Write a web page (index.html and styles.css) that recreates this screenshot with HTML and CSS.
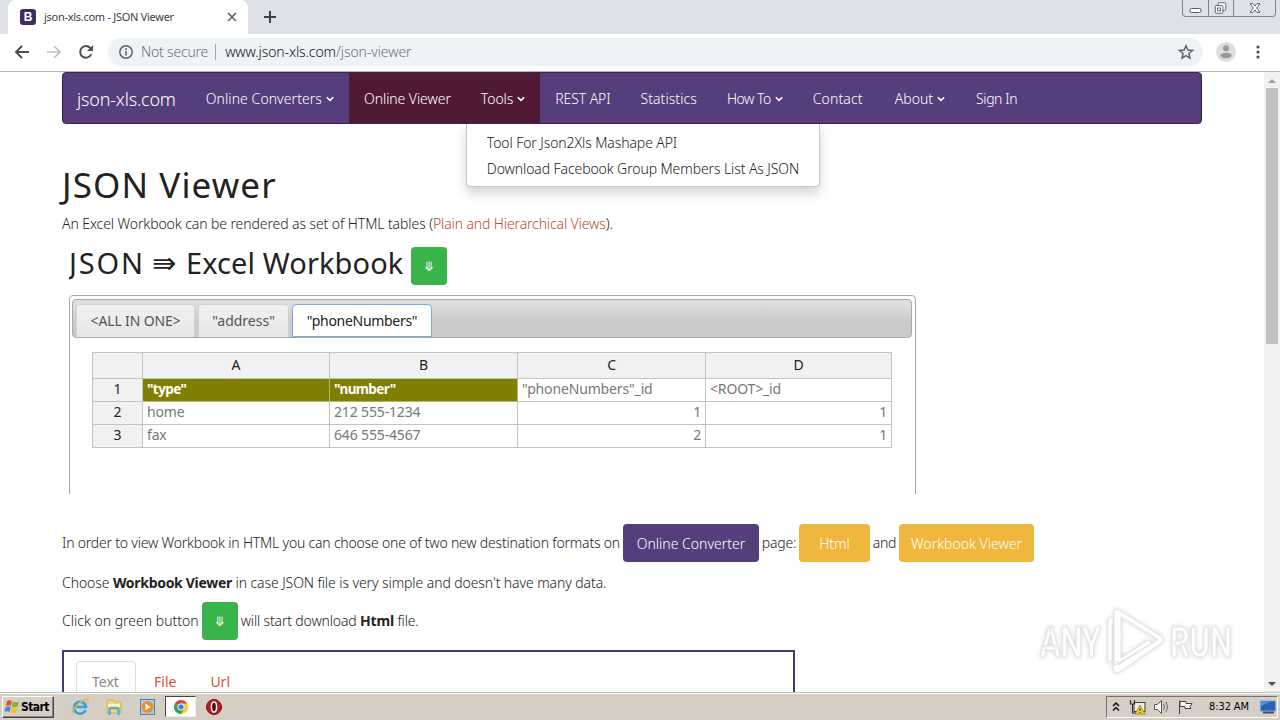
FILE: index.html
```html
<!DOCTYPE html>
<html lang="en">
<head>
    <meta charset="UTF-8">
    <title>json-xls.com - JSON Viewer</title>
    <link rel="stylesheet" href="styles.css">
</head>
<body>
    <!-- tab strip -->
    <div class="tabstrip">
        <div class="tab">
            <span class="favicon">B</span>
            <span class="tab-title">json-xls.com - JSON Viewer</span>
            <svg class="tab-close" width="10" height="10" viewBox="0 0 10 10"><path d="M1 1l8 8M9 1l-8 8" stroke="#5f6368" stroke-width="1.7"/></svg>
        </div>
        <svg class="new-tab" width="14" height="14" viewBox="0 0 14 14"><path d="M7 1v12M1 7h12" stroke="#3c4043" stroke-width="2"/></svg>
        <div class="window-buttons">
            <svg width="25" height="16" viewBox="0 0 25 16"><rect x="7" y="8.500" width="11" height="4" rx="1.500" fill="#fff" stroke="#5b5f68"/></svg>
            <svg width="25" height="16" viewBox="0 0 25 16"><g fill="#fff" stroke="#5b5f68"><rect x="9.500" y="2.500" width="8" height="8" rx="1"/><rect x="6.500" y="5.500" width="8" height="8" rx="1"/><rect x="9" y="8" width="3" height="3"/></g></svg>
            <svg width="42" height="16" viewBox="0 0 42 16"><path d="M16.500 3.500h3l2 2.500 2-2.500h3l-3.200 4.500 3.200 4.500h-3l-2-2.500-2 2.500h-3l3.200-4.500z" fill="#fff" stroke="#5b5f68"/></svg>
        </div>
    </div>

    <!-- address bar -->
    <div class="toolbar">
        <svg class="nav-icon" width="16" height="16" viewBox="0 0 16 16"><path d="M15 8H2M8 2L2 8l6 6" fill="none" stroke="#4b4e52" stroke-width="1.900"/></svg>
        <svg class="nav-icon" width="16" height="16" viewBox="0 0 16 16"><path d="M1 8h13M8 2l6 6-6 6" fill="none" stroke="#bcbec1" stroke-width="1.700"/></svg>
        <svg class="nav-icon" width="16" height="16" viewBox="0 0 16 16"><path d="M13.300 10.200A5.800 5.800 0 1 1 12.300 4" fill="none" stroke="#4b4e52" stroke-width="2"/><path d="M15 1v6H9z" fill="#4b4e52"/></svg>
        <div class="omnibox">
            <svg width="14" height="14" viewBox="0 0 14 14"><circle cx="7" cy="7" r="6.200" fill="none" stroke="#5f6368" stroke-width="1.500"/><path d="M7 6v4.500M7 3.300v1.600" stroke="#5f6368" stroke-width="1.600"/></svg>
            <span class="insecure">Not secure</span>
            <span class="url"><b>www.json-xls.com</b>/json-viewer</span>
            <svg class="star" width="16" height="16" viewBox="0 0 16 16"><path d="M8 1.800l1.800 4.300 4.700.4-3.600 3 1.100 4.600L8 11.700l-4 2.400 1.100-4.600-3.600-3 4.700-.4z" fill="none" stroke="#5f6368" stroke-width="1.500"/></svg>
        </div>
        <svg class="avatar" width="20" height="20" viewBox="0 0 20 20"><circle cx="10" cy="10" r="10" fill="#dcdddf"/><circle cx="10" cy="6.300" r="3" fill="#97999c"/><ellipse cx="10" cy="13.500" rx="5.500" ry="2.800" fill="#97999c"/></svg>
        <svg class="menu-dots" width="4" height="14" viewBox="0 0 4 14"><g fill="#4b4e52"><circle cx="2" cy="2" r="1.600"/><circle cx="2" cy="7" r="1.600"/><circle cx="2" cy="12" r="1.600"/></g></svg>
    </div>

    <div class="viewport">
        <div class="page">
            <nav class="navbar">
                <a class="brand">json-xls.com</a>
                <a class="wide">Online Converters<svg class="caret" viewBox="0 0 8 6"><path d="M.8 1.200L4 4.400l3.200-3.200"/></svg></a>
                <a class="active">Online Viewer</a>
                <div class="dropdown">
                    <a class="active">Tools<svg class="caret" viewBox="0 0 8 6"><path d="M.8 1.200L4 4.400l3.200-3.200"/></svg></a>
                    <div class="dropdown-menu">
                        <a>Tool For Json2Xls Mashape API</a>
                        <a>Download Facebook Group Members List As JSON</a>
                    </div>
                </div>
                <a class="rest">REST API</a>
                <a class="wide">Statistics</a>
                <a class="tight">How To<svg class="caret" viewBox="0 0 8 6"><path d="M.8 1.200L4 4.400l3.200-3.200"/></svg></a>
                <a class="contact">Contact</a>
                <a class="about">About<svg class="caret" viewBox="0 0 8 6"><path d="M.8 1.200L4 4.400l3.200-3.200"/></svg></a>
                <a class="signin">Sign In</a>
            </nav>

            <h1>JSON Viewer</h1>
            <p class="intro">An Excel Workbook can be rendered as set of HTML tables (<a class="link">Plain and Hierarchical Views</a>).</p>

            <section class="shot">
                <h2><span class="json">JSON</span><span class="arrow">⇛</span><span class="excel">Excel Workbook</span><span class="btn green">⤋</span></h2>
                <div class="sheet">
                    <div class="sheet-tabs">
                        <span class="all">&lt;ALL IN ONE&gt;</span>
                        <span class="address">"address"</span>
                        <span class="phones">"phoneNumbers"</span>
                    </div>
                    <table>
                        <colgroup><col class="c0"><col class="c1"><col class="c2"><col class="c3"><col class="c4"></colgroup>
                        <tr class="head"><th></th><th>A</th><th>B</th><th>C</th><th>D</th></tr>
                        <tr><th>1</th><td class="key">"type"</td><td class="key">"number"</td><td>"phoneNumbers"_id</td><td>&lt;ROOT&gt;_id</td></tr>
                        <tr><th>2</th><td>home</td><td>212 555-1234</td><td class="num">1</td><td class="num">1</td></tr>
                        <tr><th>3</th><td>fax</td><td>646 555-4567</td><td class="num">2</td><td class="num">1</td></tr>
                    </table>
                </div>
            </section>

            <p class="row formats"><span class="long">In order to view Workbook in HTML you can choose one of two new destination formats on</span><a class="btn purple">Online Converter</a><span class="word">page:</span><a class="btn orange html">Html</a><span class="word">and</span><a class="btn orange book">Workbook Viewer</a></p>
            <p class="choose">Choose <b>Workbook Viewer</b> in case JSON file is very simple and doesn't have many data.</p>
            <p class="row click"><span>Click on green button</span><a class="btn green">⤋</a><span class="after">will start download <b>Html</b> file.</span></p>

            <div class="source">
                <span class="current">Text</span>
                <span>File</span>
                <span>Url</span>
            </div>
        </div>

        <div class="scrollbar">
            <svg width="16" height="16" viewBox="0 0 16 16"><path d="M4 11l4-4 4 4z" fill="#a0a0a0"/></svg>
            <div class="thumb"></div>
            <svg width="16" height="16" viewBox="0 0 16 16"><path d="M4 6h8l-4 4z" fill="#505050"/></svg>
        </div>

        <svg class="watermark" width="230" height="84" viewBox="0 0 230 84">
            <g fill="#fff" stroke="#e4e4e4" stroke-width="1">
                <text x="9" y="56" textLength="61" lengthAdjust="spacingAndGlyphs">ANY</text>
                <text x="139" y="56" textLength="62" lengthAdjust="spacingAndGlyphs">RUN</text>
                <path d="M88 9l42 26c3 2 3 5 0 7L90 70c-4 3-8 1-8-3v-4l5-3v4l38-24c2-1 2-2 0-3L90 16v41l27-18 4 3-38 23V12c0-3 2-5 5-3z"/>
                <path d="M77 62V21c0-3 2-5 5-4v5l-1 2v35z"/>
            </g>
        </svg>
    </div>

    <!-- windows taskbar -->
    <footer class="taskbar">
        <div class="start">
            <svg width="17" height="16" viewBox="0 0 17 16"><path d="M3 2c2-1.300 3.500-1 5 0L7 7C5 6 4 6 2 7z" fill="#e5532d"/><path d="M9 2.500c2 1 4 1 6 0l-1.500 5c-2 1-3.500.8-5.500 0z" fill="#79b82b"/><path d="M1.700 8c2-1 3.500-.8 5 0L5.500 13c-1.500-1-3-1-5 0z" fill="#3d8be0"/><path d="M7.800 8.500c2 1 3.500 1 5.500 0L12 13.500c-2 1-3.500 1-5.500 0z" fill="#f5bd24"/></svg>
            Start
        </div>
        <div class="quick">
            <svg width="18" height="18" viewBox="0 0 18 18"><path d="M14.500 12.300A6 6 0 1 1 15 9H5" fill="none" stroke="#35a3e3" stroke-width="2.600"/><path d="M2 16C-1 13 10 1 16 1.500c2 .3 1 3 0 4.500" fill="none" stroke="#e7b930" stroke-width="1.300"/></svg>
            <svg width="18" height="18" viewBox="0 0 18 18"><path d="M2 2h6l1 2h7v11H2z" fill="#f0d87c" stroke="#cdae50"/><path d="M3 6h12v3H3z" fill="#fff3b4"/><path d="M4.500 17v-5q0-2 2-2h5q2 0 2 2v5" fill="none" stroke="#59acd8" stroke-width="2.500"/></svg>
            <svg width="18" height="18" viewBox="0 0 18 18"><rect x="1.500" y="1.500" width="14" height="15" fill="#a9cdec" stroke="#5083b5"/><circle cx="8.500" cy="9" r="6" fill="#f28a1c"/><path d="M6.500 5.500l5 3.500-5 3.500z" fill="#fff"/></svg>
            <span class="running"><svg width="16" height="16" viewBox="0 0 16 16"><path d="M8 8L1.900 4.500A7 7 0 0 1 14.100 4.500z" fill="#df4337"/><path d="M8 8V4.500h6.100A7 7 0 0 1 8 15z" fill="#f7cc2e"/><path d="M8 8l3 2-3 5A7 7 0 0 1 1.900 4.500z" fill="#35a354"/><circle cx="8" cy="8" r="3.200" fill="#3f7fe8" stroke="#fff"/></svg></span>
            <svg width="18" height="18" viewBox="0 0 18 18"><circle cx="9" cy="9" r="7.500" fill="#bd1720" stroke="#7c1014"/><ellipse cx="9" cy="9" rx="2.600" ry="5" fill="#4c080b" stroke="#fff" stroke-width="1.500"/></svg>
        </div>
        <div class="tray">
            <svg width="8" height="12" viewBox="0 0 8 12"><path d="M1 5l3-3 3 3M1 9.500l3-3 3 3" fill="none" stroke="#111" stroke-width="1.500"/></svg>
            <svg class="net" width="17" height="16" viewBox="0 0 17 16"><rect x="5" y="3.500" width="11" height="9" fill="#eee" stroke="#444"/><path d="M1.500 1v4h4V1M3.500 5v9h5" fill="none" stroke="#333" stroke-width="1.200"/><path d="M11 6l5 9H6z" fill="#f5d51b" stroke="#806c10" stroke-width=".7"/><path d="M11 9v3M11 13v1" stroke="#222"/></svg>
            <svg width="17" height="16" viewBox="0 0 17 16"><path d="M1.500 5.500h3l4-4v13l-4-4h-3z" fill="#fff" stroke="#555"/><path d="M10.500 5q2 3 0 6M12.700 3q3.300 5 0 10" fill="none" stroke="#666"/></svg>
            <svg class="flag" width="17" height="16" viewBox="0 0 17 16"><path d="M2.500 15V1.500M3 2.500h6v2h6l-2 3 1 2H8v-2H3z" fill="#fff" stroke="#444"/></svg>
            <span class="clock">8:32 AM</span>
            <svg width="16" height="14" viewBox="0 0 16 14"><rect x=".5" y="1" width="15" height="10" fill="#2463b8" stroke="#75a5d8"/><path d="M1 6L11 1.500H1z" fill="#4c91de"/><path d="M3 12.500h11" stroke="#384f72" stroke-width="2"/></svg>
        </div>
    </footer>
</body>
</html>
```
FILE: styles.css
```css
* { box-sizing: border-box; }
body {
    margin: 0;
    width: 1280px;
    height: 720px;
    overflow: hidden;
    display: flex;
    flex-direction: column;
    background: #fff;
    color: #222;
    font: 300 14px/20px 'Noto Sans', 'Open Sans', sans-serif;
}
svg { display: block; flex: none; }

/* browser chrome */
.tabstrip {
    height: 34px;
    display: flex;
    align-items: center;
    background: #dee1e8;
    padding-left: 8px;
}
.tab {
    width: 240px;
    height: 34px;
    padding: 0 12px;
    display: flex;
    align-items: center;
    background: #fff;
    border-radius: 8px 8px 0 0;
    font-size: 11px;
    font-weight: 400;
    letter-spacing: -0.28px;
    color: #3c4043;
}
.favicon {
    width: 16px;
    height: 16px;
    border-radius: 3px;
    background: #3f2c63;
    color: #fff;
    font: bold 12px/16px 'Liberation Sans', sans-serif;
    text-align: center;
}
.tab-title { margin-left: 8px; }
.tab-close { margin-left: auto; margin-right: -1px; }
.new-tab { margin-left: 15px; }
.window-buttons {
    align-self: flex-start;
    display: flex;
    margin-left: auto;
    margin-right: 4px;
    border: 1px solid #7f838c;
    border-top: 0;
    border-radius: 0 0 4px 4px;
}
.window-buttons svg + svg { border-left: 1px solid #7f838c; }
.toolbar {
    height: 38px;
    display: flex;
    align-items: center;
    padding: 0 20px 1px 14px;
    border-bottom: 1px solid #b5b5b5;
}
.nav-icon { margin-right: 16px; }
.omnibox {
    flex: 1;
    height: 28px;
    display: flex;
    align-items: center;
    margin-left: -2px;
    padding: 0 9px 0 11px;
    border-radius: 14px;
    background: #f0f3f6;
    color: #6d7175;
}
.insecure {
    margin-left: 8px;
    padding-right: 7px;
    border-right: 1px solid #a5a8ab;
    line-height: 16px;
    letter-spacing: -0.2px;
}
.url { margin-left: 9px; letter-spacing: -0.1px; }
.url b { font-weight: 300; color: #111; }
.star { margin-left: auto; }
.avatar { margin-left: 13px; }
.menu-dots { margin-left: 20px; }

/* page */
.viewport {
    flex: 1;
    min-height: 0;
    display: flex;
    position: relative;
}
.page {
    flex: 1;
    padding: 0 62px;
    overflow: hidden;
}
.navbar {
    height: 52px;
    display: flex;
    background: #563d7c;
    border: 1px solid #3e2348;
    border-radius: 4px;
}
.navbar a {
    display: flex;
    align-items: center;
    padding: 2px 15px 0;
    color: #fff;
    white-space: nowrap;
}
.navbar .brand { font-size: 18px; padding: 1px 15px 0 14px; letter-spacing: -0.2px; }
.navbar .wide { letter-spacing: 0.07px; }
.navbar .rest { letter-spacing: -0.1px; }
.navbar .tight { letter-spacing: -0.5px; }
.navbar .contact { letter-spacing: 0.15px; }
.navbar .about { padding-left: 17px; }
.navbar .signin { padding-left: 16px; letter-spacing: -0.4px; }
.navbar .active { height: 50px; letter-spacing: -0.07px; background: #501a35; }
.caret {
    width: 8px;
    height: 6px;
    margin-left: 4px;
    fill: none;
    stroke: #fff;
    stroke-width: 1.6;
}
.dropdown { position: relative; }
.dropdown-menu {
    position: absolute;
    top: 51px;
    left: 0;
    width: 354px;
    height: 63px;
    padding: 5px 0;
    background: #fff;
    border: 1px solid #c6c6c6;
    border-top: 0;
    border-radius: 0 0 4px 4px;
    box-shadow: 0 6px 12px rgba(0, 0, 0, 0.175);
}
.navbar .dropdown-menu a {
    height: 26px;
    padding: 2px 0 0 20px;
    color: #222;
    letter-spacing: -0.1px;
}
h1 {
    margin: 41px 0 0;
    font-size: 35px;
    font-weight: 400;
    line-height: 40px;
    letter-spacing: 1.1px;
}
p { margin: 0; white-space: nowrap; }
b { font-weight: 700; }
.intro { margin-top: 9px; letter-spacing: -0.09px; }
.link { color: #c04a29; letter-spacing: -0.13px; }
.shot {
    width: 848px;
    height: 260px;
    margin: 0 0 0 7px;
    overflow: hidden;
    font-weight: 400;
    color: #555;
}
h2 {
    display: flex;
    align-items: center;
    height: 61px;
    margin: 0;
    padding-top: 3px;
    color: #222;
    font-size: 29px;
    font-weight: 400;
}
.json, .arrow, .excel { padding-bottom: 6px; }
.json { width: 83px; letter-spacing: 1.8px; }
.arrow { width: 34px; font-family: 'DejaVu Sans', sans-serif; }
.excel { width: 225px; letter-spacing: 0.1px; }
.btn {
    height: 38px;
    padding: 2px 0 0;
    display: flex;
    align-items: center;
    justify-content: center;
    border-radius: 4px;
    color: #fff;
    font-size: 14px;
    font-weight: 300;
}
.green {
    width: 36px;
    padding: 1px 0 0;
    background: #38b44a;
    font: 400 13px 'DejaVu Sans', sans-serif;
}
.sheet {
    width: 847px;
    height: 220px;
    padding: 3px 3px 0 2px;
    border: 1px solid #a7a7a7;
    border-radius: 4px 4px 0 0;
}
.sheet-tabs {
    height: 39px;
    display: flex;
    gap: 3px;
    padding: 4px 0 0 3px;
    border: 1px solid #aaa;
    border-radius: 4px;
    background: linear-gradient(#e2e2e2, #c9c9c9 60%, #cbcbcb);
}
.sheet-tabs span {
    padding: 6px 0 0;
    text-align: center;
    background: linear-gradient(#f1f1f1, #e6e6e6);
    border: 1px solid #d3d3d3;
    border-bottom: 0;
    border-radius: 4px 4px 0 0;
}
.sheet-tabs .all { width: 119px; letter-spacing: -0.15px; }
.sheet-tabs .address { width: 91px; }
.sheet-tabs .phones {
    width: 140px;
    background: #fff;
    border: 1px solid #79a7e3;
    color: #222;
    letter-spacing: -0.3px;
}
table {
    width: 799px;
    margin: 14px 0 0 20px;
    table-layout: fixed;
    border-collapse: collapse;
}
.c0 { width: 50px; }
.c1 { width: 187px; }
.c2, .c3 { width: 188px; }
.c4 { width: 186px; }
tr { height: 23px; }
.head { height: 26px; }
th, td {
    padding: 0 4px 2px;
    border: 1px solid #c3c3c3;
    line-height: 20px;
    text-align: left;
    color: #777;
    letter-spacing: -0.15px;
}
th {
    background: #f1f1f1;
    color: #222;
    text-align: center;
    font-weight: 400;
}
td.key {
    background: #808000;
    border-color: #808000 #b8b87a #b8b87a #808000;
    color: #fff;
    font-size: 13.5px;
    font-weight: 700;
    letter-spacing: -0.6px;
}
td.num { text-align: right; }
.row { display: flex; align-items: center; }
.formats { height: 38px; margin-top: 30px; }
.long { width: 561px; letter-spacing: -0.2px; }
.purple { width: 136px; background: #563d7c; }
.orange { background: #efb73e; }
.html { width: 71px; }
.book { width: 135px; }
.word { width: 40px; text-align: center; letter-spacing: -0.2px; }
.html + .word { width: 29px; }
.choose { margin-top: 11px; letter-spacing: -0.09px; }
.choose b { letter-spacing: -0.3px; }
.click { height: 38px; margin-top: 9px; }
.click .green { margin: 0 3px; }
.click .after { letter-spacing: -0.16px; }
.source {
    width: 733px;
    height: 80px;
    display: flex;
    margin-top: 10px;
    padding: 9px 12px;
    border: 2px solid #4b3975;
    font-size: 14px;
    font-weight: 400;
    color: #d9533e;
}
.source span { padding: 11px 0 0 18px; }
.source span + span + span { padding-left: 34px; }
.source .current {
    width: 60px;
    padding: 10px 0 0 15px;
    border: 1px solid #ddd;
    border-radius: 4px 4px 0 0;
    color: #888;
}
.scrollbar {
    width: 16px;
    display: flex;
    flex-direction: column;
    background: #f1f1f1;
}
.thumb {
    width: 12px;
    height: 256px;
    margin: 0 2px auto;
    background: #c1c1c1;
}
.watermark {
    position: absolute;
    left: 1031px;
    top: 529px;
    overflow: visible;
    font: 500 42px Roboto, sans-serif;
    filter: drop-shadow(0 0 2px rgba(0, 0, 0, 0.18));
}

/* taskbar */
.taskbar {
    height: 28px;
    display: flex;
    align-items: center;
    background: #d5cec5;
    border-top: 1px solid #c2bdb5;
    box-shadow: inset 0 1px #fff;
    color: #000;
    font: 400 11px 'DejaVu Sans Condensed', 'DejaVu Sans', sans-serif;
}
.start {
    width: 52px;
    height: 22px;
    display: flex;
    align-items: center;
    margin: 0 0 0 2px;
    padding-left: 1px;
    border: 1px solid;
    border-color: #fff #444 #444 #fff;
    box-shadow: inset -1px -1px #8c877f;
    font-weight: 700;
    font-size: 12px;
    letter-spacing: -0.6px;
}
.quick {
    display: flex;
    align-items: center;
    margin-left: 17px;
}
.quick > svg { margin-right: 16px; }
.running {
    width: 31px;
    height: 21px;
    margin: 0 9px 0 -8px;
    padding: 2px 7px;
    background: #fff;
    border: 1px solid #444;
    border-color: #444 #eee #eee #444;
}
.tray {
    height: 22px;
    display: flex;
    align-items: center;
    margin: 0 2px 0 auto;
    width: 172px;
    padding-left: 5px;
    border: 1px solid;
    border-color: #77736d #fff #fff #77736d;
}
.tray .net { margin: 0 7px 0 9px; }
.tray .flag { margin-left: 7px; }
.clock { width: 42px; margin: 0 9px 0 15px; letter-spacing: -0.1px; white-space: nowrap; }
```
